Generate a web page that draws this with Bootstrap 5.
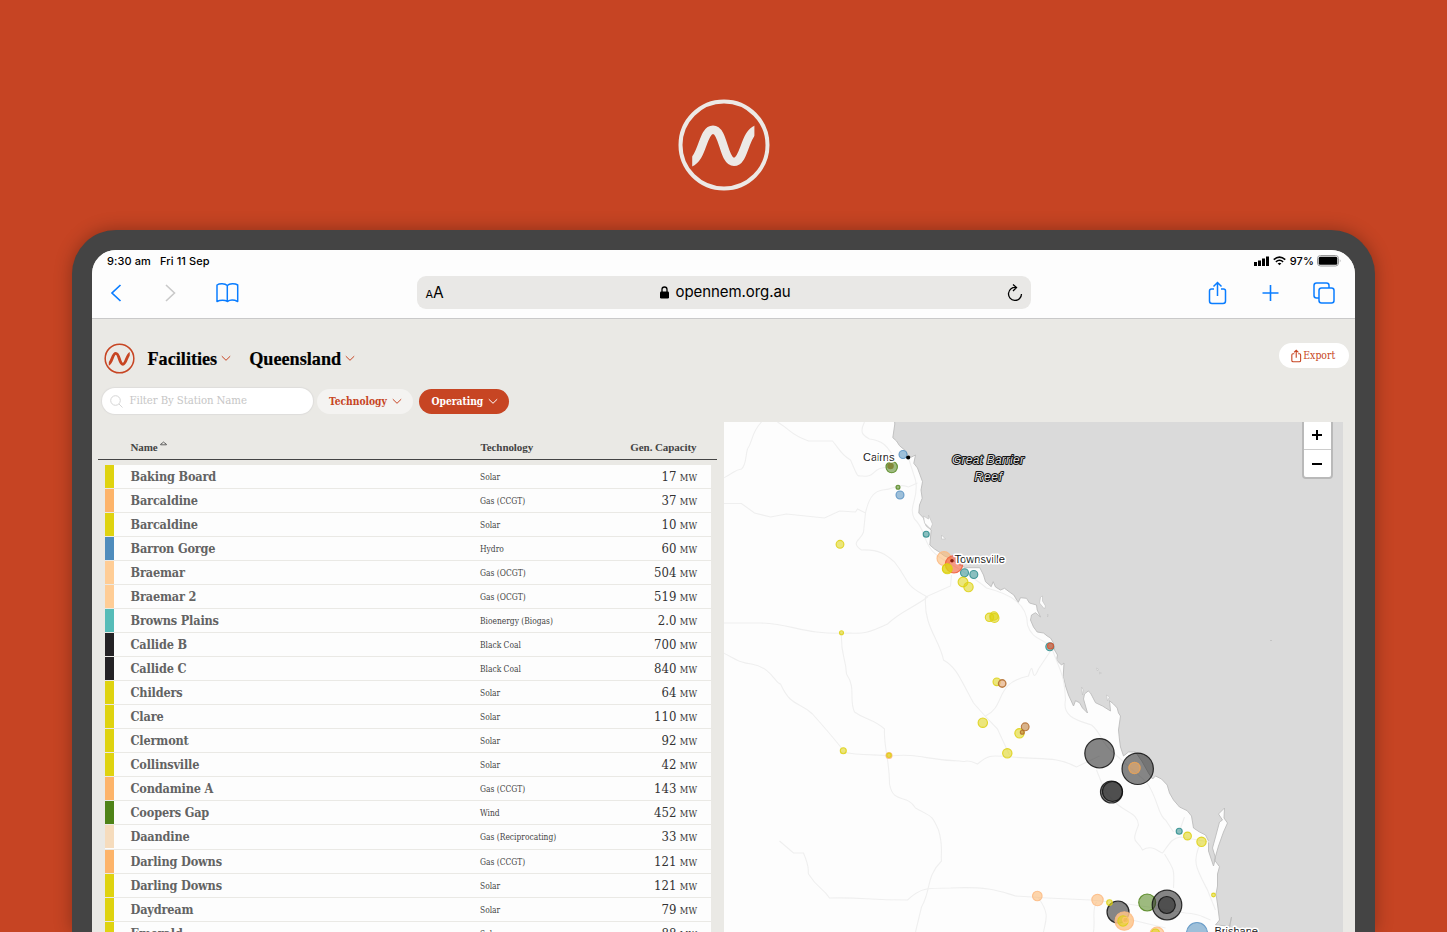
<!DOCTYPE html>
<html lang="en">
<head>
<meta charset="utf-8">
<meta name="viewport" content="width=device-width, initial-scale=1">
<title>OpenNEM Facilities</title>
<link href="https://cdn.jsdelivr.net/npm/bootstrap@5.3.0/dist/css/bootstrap.min.css" rel="stylesheet">
<style>
:root{--rust:#c74523;--paper:#eae9e5;--ios:#0a7dff}
html,body{height:932px;overflow:hidden}
body{background:#c64423;font-family:Inter,"Liberation Sans",sans-serif;color:#000}
svg{display:block;flex:none}
.hero{height:230px;padding-top:98.5px}
.tablet{width:1303px;height:702px;margin-left:72px;border:20px solid #444;border-bottom:0;border-radius:44px 44px 0 0;box-shadow:0 0 18px rgba(0,0,0,.3);background:#444}
.screen{height:682px;border-radius:24px 24px 0 0;background:var(--paper);overflow:hidden}
.chrome{height:69px;background:#fdfdfd;border-bottom:1px solid #c9c9c9}
.status{height:22px;padding:0 14px 0 15px;font-size:11px;line-height:22px;font-weight:500;letter-spacing:.1px}
.tools{height:42px;color:var(--ios);margin-top:-.5px}
.address{width:614px;height:33px;border-radius:9px;background:#e9e8e6;color:#000;font-size:15px;letter-spacing:-.08px}
.serif{font-family:"DejaVu Serif Condensed","DejaVu Serif",serif;font-stretch:condensed}
.display-face{font-family:"Liberation Serif",serif;font-weight:700}
.site-head{height:69px;padding:0 6px 0 12px}
.site-head .display-face{font-size:18.2px;line-height:24px;-webkit-text-stroke:.2px #000}
.pill{height:25px;border-radius:13px;font-size:10.2px;line-height:25px;white-space:nowrap}
.export{width:70px;background:#fff;color:var(--rust)}
.filters{height:26px;padding-left:10px}
.search{width:211px;height:26px;background:#fff;border-radius:13px;color:#c6c6c6;font-size:11.3px;letter-spacing:-.08px;box-shadow:0 0 1px 1px #dedddb}
.main-area{height:511px;padding-left:6px;margin-top:8px}
.listing{width:619px}
.thead-line{height:38px;border-bottom:1px solid #444;color:#444;font-size:11px;letter-spacing:-.08px;padding:15px 0 0 32.5px;line-height:20px}
.rows{margin:4px 0 0 7px;width:605.5px;height:469px;overflow:hidden}
.station{height:24.04px;border-top:1px solid var(--paper);background:#fdfdfd;line-height:24px}
.swatch{width:9px;height:23px}
.s-name{width:349.500px;margin-left:16.500px;font-size:12.6px;letter-spacing:-.17px;font-weight:700;color:#636363}
.s-tech{width:116px;font-size:8.4px;color:#444}
.s-cap{width:101px;text-align:right;font-size:13px;color:#333}
.s-cap small{font-size:9.3px;margin-left:3.5px}
.map-pane{width:619px;height:511px;margin-left:6.5px;background:#fdfdfd;position:relative;overflow:hidden}
.zoomer{position:absolute;right:10px;top:-3px;width:31px;height:60px;border:2px solid #b9b9b9;border-radius:4px;background:#fff}
.zoomer div{height:27px}
.zoomer div:first-child{height:29px;border-bottom:1px solid #ccc}
.solar{background:#dfd310}.ccgt{background:#fdb46a}.ocgt{background:#ffcd96}.hydro{background:#4f8cbc}
.bio{background:#57bcb8}.coal{background:#242225}.wind{background:#4f8318}.recip{background:#f6dcbd}
</style>
</head>
<body>
<header class="hero d-flex justify-content-center">
  <svg width="92" height="92" viewBox="0 0 92 92" fill="none" stroke="#ece9e6"><defs><clipPath id="waveEnds"><path d="M14.200 0h62.200v92H14.200z"/></clipPath></defs><circle cx="46" cy="46" r="43.500" stroke-width="4"/><path clip-path="url(#waveEnds)" d="M11 64C25 61 24 30.700 35 30.700C46 30.700 45 62.900 56 62.900C67 62.900 66 33 80 30" stroke-width="8.400"/></svg>
</header>
<div class="tablet">
<div class="screen">
  <div class="chrome">
    <div class="status d-flex justify-content-between">
      <div><span>9:30 am</span><span style="margin-left:6px">&nbsp;Fri 11 Sep</span></div>
      <div class="d-flex align-items-center">
        <svg width="15" height="10" viewBox="0 0 15 10"><path d="M0 6h3v4H0zM4 4.500h3V10H4zM8 2.500h3V10H8zM12 .500h3V10h-3z"/></svg>
        <svg style="margin-left:4px" width="13" height="10" viewBox="0 0 14 10" fill="none" stroke="#000" stroke-width="1.700"><path d="M.8 3.500Q7-1.800 13.200 3.500M3.100 5.900Q7 2.600 10.900 5.900"/><path d="M5 7.700Q7 6.300 9 7.700L7 9.700z" fill="#000" stroke="none"/></svg>
        <span style="margin-left:4px">97%</span>
        <svg style="margin-left:3px" width="24" height="12" viewBox="0 0 24 12"><rect x=".5" y=".5" width="21" height="10.500" rx="3" fill="none" stroke="#999"/><rect x="1.700" y="1.700" width="18.600" height="8" rx="1.500"/><path d="M22.800 4.200q1.400 1.600 0 3.200z" fill="#999"/></svg>
      </div>
    </div>
    <div class="tools d-flex align-items-center">
      <svg width="34" height="20" viewBox="0 0 34 20" fill="none" stroke="currentColor" stroke-width="1.700"><path d="M28.500 2L20 10l8.500 8"/></svg>
      <svg style="margin-left:38px" width="14" height="20" viewBox="0 0 14 20" fill="none" stroke="#c9c9c9" stroke-width="1.600"><path d="M2 2l8.500 8L2 18"/></svg>
      <svg style="margin-left:38px" width="24" height="20" viewBox="0 0 24 20" fill="none" stroke="currentColor" stroke-width="1.500" stroke-linejoin="round"><path d="M11.300 2.500C9 .3 3.500.3 1 2V18.500C4 17 9 16.800 11.300 18.500C14 16.800 18.500 17 21.700 18.500V2C19 .3 13.500.3 11.300 2.500V18.500"/></svg>
      <div class="address d-flex align-items-center justify-content-between" style="margin-left:176.500px;padding:0 8px 0 9px">
        <span><span style="font-size:11px">A</span><span style="font-size:15.500px">A</span></span>
        <span class="d-flex align-items-center"><svg style="margin-right:7px" width="9" height="13" viewBox="0 0 9 13"><rect y="5.500" width="9" height="7" rx="1.300"/><path d="M2 6V3.500a2.500 2.500 0 015 0V6" fill="none" stroke="#000" stroke-width="1.300"/></svg>opennem.org.au</span>
        <svg width="16" height="18" viewBox="0 0 16 18" fill="none" stroke="#000" stroke-width="1.300"><path d="M9 3.500A6.500 6.500 0 1014.500 10M6 .500l3.500 3L6 7"/></svg>
      </div>
      <svg style="margin-left:177.500px" width="20" height="24" viewBox="0 0 20 24" fill="none" stroke="currentColor" stroke-width="1.500"><path d="M6 8H3.500Q1.500 8 1.500 10V20Q1.500 22.500 4 22.500H15Q17.500 22.500 17.500 20V10Q17.500 8 15.500 8H13M9.500 15V2M5.500 5.500l4-4 4 4"/></svg>
      <svg style="margin-left:34px" width="18" height="18" viewBox="0 0 18 18" stroke="currentColor" stroke-width="1.600"><path d="M8.500 1V17M.5 9h16"/></svg>
      <svg style="margin-left:33px" width="22" height="22" viewBox="0 0 22 22" fill="none" stroke="currentColor" stroke-width="1.500"><rect x="6" y="6" width="15" height="15" rx="2.500"/><path d="M6 16H3.500Q1 16 1 13.500V3.500Q1 1 3.500 1h10Q16 1 16 3.500V6"/></svg>
    </div>
  </div>

  <div class="site-head d-flex align-items-center">
    <svg style="margin-top:9px" width="31" height="31" viewBox="0 0 92 92" fill="none" stroke="#c74523"><circle cx="46" cy="46" r="42.500" stroke-width="4.500"/><path clip-path="url(#waveEnds)" d="M11 64C25 61 24 30.700 35 30.700C46 30.700 45 62.900 56 62.900C67 62.900 66 33 80 30" stroke-width="8.600"/></svg>
    <span class="display-face" style="margin:11px 0 0 12.500px">Facilities</span>
    <svg style="margin:10px 0 0 4px" width="10" height="7" viewBox="0 0 10 7" fill="none" stroke="#c74523"><path d="M.8 1.200L5 5.300 9.200 1.200"/></svg>
    <span class="display-face" style="margin:11px 0 0 18px">Queensland</span>
    <svg style="margin:10px 0 0 3.500px" width="10" height="7" viewBox="0 0 10 7" fill="none" stroke="#c74523"><path d="M.8 1.200L5 5.300 9.200 1.200"/></svg>
    <div class="pill export serif ms-auto d-flex justify-content-center align-items-center" style="margin-top:4px;padding-right:2px;font-size:10.400px"><svg style="margin-right:1.500px" width="11" height="14" viewBox="0 0 20 24" fill="none" stroke="currentColor" stroke-width="2"><path d="M6 8H3.500Q1.500 8 1.500 10V20Q1.500 22.500 4 22.500H15Q17.500 22.500 17.500 20V10Q17.500 8 15.500 8H13M9.500 15V2M5.500 5.500l4-4 4 4"/></svg>Export</div>
  </div>
  <div class="filters serif d-flex align-items-center">
    <div class="search d-flex align-items-center"><svg style="margin:0 7px 0 7.500px" width="13" height="13" viewBox="0 0 13 13" fill="none" stroke="#d5d5d5"><circle cx="5.500" cy="5.500" r="4.800"/><path d="M9 9l3.500 3.500"/></svg>Filter By Station Name</div>
    <div class="pill fw-bold d-flex align-items-center" style="margin-left:4px;width:96px;padding-left:12px;background:#f4f3f1;color:#c74523"><span style="width:63px">Technology</span><svg width="10" height="7" viewBox="0 0 10 7" fill="none" stroke="currentColor"><path d="M.8 1.200L5 5.300 9.200 1.200"/></svg></div>
    <div class="pill fw-bold d-flex align-items-center" style="margin-left:6px;width:90px;padding-left:12.500px;background:#c74523;color:#fff"><span style="width:56px">Operating</span><svg width="10" height="7" viewBox="0 0 10 7" fill="none" stroke="currentColor"><path d="M.8 1.200L5 5.300 9.200 1.200"/></svg></div>
  </div>

  <div class="main-area d-flex">
    <div class="listing">
      <div class="thead-line display-face d-flex"><span style="width:350px">Name<svg class="d-inline-block align-top" style="margin:4px 0 0 2px" width="7" height="5" viewBox="0 0 7 5" fill="none" stroke="#444" stroke-width=".8"><path d="M.5 3.800Q1 2.500 2 2.300 3.500-.2 5 2.300 6.200 2.500 6.500 3.800z"/></svg></span><span style="width:116px">Technology</span><span class="text-end" style="width:100px">Gen. Capacity</span></div>
      <div class="rows serif">
        <div class="station d-flex"><i class="swatch solar"></i><span class="s-name">Baking Board</span><span class="s-tech">Solar</span><span class="s-cap">17<small>MW</small></span></div>
        <div class="station d-flex"><i class="swatch ccgt"></i><span class="s-name">Barcaldine</span><span class="s-tech">Gas (CCGT)</span><span class="s-cap">37<small>MW</small></span></div>
        <div class="station d-flex"><i class="swatch solar"></i><span class="s-name">Barcaldine</span><span class="s-tech">Solar</span><span class="s-cap">10<small>MW</small></span></div>
        <div class="station d-flex"><i class="swatch hydro"></i><span class="s-name">Barron Gorge</span><span class="s-tech">Hydro</span><span class="s-cap">60<small>MW</small></span></div>
        <div class="station d-flex"><i class="swatch ocgt"></i><span class="s-name">Braemar</span><span class="s-tech">Gas (OCGT)</span><span class="s-cap">504<small>MW</small></span></div>
        <div class="station d-flex"><i class="swatch ocgt"></i><span class="s-name">Braemar 2</span><span class="s-tech">Gas (OCGT)</span><span class="s-cap">519<small>MW</small></span></div>
        <div class="station d-flex"><i class="swatch bio"></i><span class="s-name">Browns Plains</span><span class="s-tech">Bioenergy (Biogas)</span><span class="s-cap">2.0<small>MW</small></span></div>
        <div class="station d-flex"><i class="swatch coal"></i><span class="s-name">Callide B</span><span class="s-tech">Black Coal</span><span class="s-cap">700<small>MW</small></span></div>
        <div class="station d-flex"><i class="swatch coal"></i><span class="s-name">Callide C</span><span class="s-tech">Black Coal</span><span class="s-cap">840<small>MW</small></span></div>
        <div class="station d-flex"><i class="swatch solar"></i><span class="s-name">Childers</span><span class="s-tech">Solar</span><span class="s-cap">64<small>MW</small></span></div>
        <div class="station d-flex"><i class="swatch solar"></i><span class="s-name">Clare</span><span class="s-tech">Solar</span><span class="s-cap">110<small>MW</small></span></div>
        <div class="station d-flex"><i class="swatch solar"></i><span class="s-name">Clermont</span><span class="s-tech">Solar</span><span class="s-cap">92<small>MW</small></span></div>
        <div class="station d-flex"><i class="swatch solar"></i><span class="s-name">Collinsville</span><span class="s-tech">Solar</span><span class="s-cap">42<small>MW</small></span></div>
        <div class="station d-flex"><i class="swatch ccgt"></i><span class="s-name">Condamine A</span><span class="s-tech">Gas (CCGT)</span><span class="s-cap">143<small>MW</small></span></div>
        <div class="station d-flex"><i class="swatch wind"></i><span class="s-name">Coopers Gap</span><span class="s-tech">Wind</span><span class="s-cap">452<small>MW</small></span></div>
        <div class="station d-flex"><i class="swatch recip"></i><span class="s-name">Daandine</span><span class="s-tech">Gas (Reciprocating)</span><span class="s-cap">33<small>MW</small></span></div>
        <div class="station d-flex"><i class="swatch ccgt"></i><span class="s-name">Darling Downs</span><span class="s-tech">Gas (CCGT)</span><span class="s-cap">121<small>MW</small></span></div>
        <div class="station d-flex"><i class="swatch solar"></i><span class="s-name">Darling Downs</span><span class="s-tech">Solar</span><span class="s-cap">121<small>MW</small></span></div>
        <div class="station d-flex"><i class="swatch solar"></i><span class="s-name">Daydream</span><span class="s-tech">Solar</span><span class="s-cap">79<small>MW</small></span></div>
        <div class="station d-flex"><i class="swatch solar"></i><span class="s-name">Emerald</span><span class="s-tech">Solar</span><span class="s-cap">88<small>MW</small></span></div>
      </div>
    </div>
    <div class="map-pane">
      <svg width="619" height="511" viewBox="723.5 422 619 511">
        <!-- sea -->
        <path fill="#dadada" stroke="#bcbcbc" stroke-width=".9" d="M894 420L894.300 424 892.300 437.700 896 441 899 445.700 905.300 451 907.300 455 911 457 915 455 913.300 463.300 917 468 919.300 474.300 922 481.700 920.500 490 921.700 498.300 919 505 918.300 513 923 518 925.700 526 930.700 530 929.300 545 934 549 938.300 551.700 944 556 950 558.300 957 564 965 567.700 979.300 567.700 983 575 985 581.700 990.700 586.700 992.700 581.700 995 587 1000 590 1004 588.300 1009 592 1013.300 595 1017.700 602.500 1020 597.700 1026 598.300 1029 603 1036 605 1036.700 610 1040 617 1035 612.700 1031 615 1030 620 1033 627 1036.700 632 1043 633 1046.700 636 1050 638 1053 643 1054 650 1057 655 1056 660 1061 665 1063.500 663 1062.700 676.700 1065 686 1068 695 1073 706 1075 700.700 1079 702.700 1082 708 1087 713 1085 706 1083 699 1084 694 1087.700 691 1090 693 1095 702.700 1102 706 1110 711 1109 700.700 1113 704 1116.700 708 1118 713 1120 716 1118 730 1119 740 1120 747 1123 756 1128 752 1135 752 1141.700 761.700 1148 773 1152 779 1155 776 1161 779 1166.700 785 1169 793 1173 800 1179 807 1186.700 810.700 1191 816 1193 828 1199 832 1205 835 1208 841 1208 851 1213 866 1215 858 1212 848 1215 837 1219 822 1222 820 1218 814 1224 808 1223.500 818 1227 823 1223 832 1218 846 1214 860 1219 866.700 1217 874 1217 886 1215.500 894 1217 904 1219 920 1215 925 1229 926 1231 917 1228 934H1344V420z"/>
        <g fill="#fdfdfd" stroke="#c4c4c4" stroke-width=".7"><path d="M923 516l5 3 0-4 4 9-2 5-6-6zM941 535l4 4-4 0zM1040 597l2-1 0 5 3 5-1 3-5-6zM1047 614l1 1-1 2zM1081 687l2 3-1 5zM1106 695l3 2-2 4zM1096 668l2 1-1 2zM1099 672l2 1-2 1z"/></g>
        <circle cx="1270.500" cy="640.500" r=".6" fill="#aaa"/>
        <!-- roads -->
        <g fill="none" stroke="#efefef" stroke-width="1.100">
          <path d="M723 478C735 472 734 470 741 469C746 465 745 455 747 449C753 440 750 434 761 422M777 422C793 432 789 434 808 441H832C839 449 840 454 850 460C858 478 856 476 862 476C876 478 870 467 890 467M864 422C858 434 864 436 869 439C885 441 888 449 892 455"/>
          <path d="M723 503.500H741L754 513L770 517L786 514L824 518L839 511L855 512L857 509L865 513C869 494 876 491 882 490C896 489 896 483 908 487L917 483M865 513L863 532C861 540 849 542 861 550C880 549 887 556 894 562C910 582 902 584 927 597C916 606 899 612 887 624C868 633 862 634 850 633C800 635 795 624 760 623H723M841 633C840 656 845 655 846 674C856 689 848 699 854 712C865 720 873 719 884 729C883 746 889 760 889 784C893 805 906 793 915 808C931 817 931 814 938 830C943 846 940 855 941 861C925 877 931 890 921 907L915 932"/>
          <path d="M723 653C737 660 740 663 751 664C771 667 775 684 780 684C791 708 799 701 812 714Q829 733 841 748M841 752C862 756 875 754 889 756C920 753 924 760 959 761C967 763 964 758 977 764C990 753 992 756 1012 757C1040 760 1056 756 1076 767L1099 756"/>
          <path d="M779 841L793 853H803C810 870 807 869 808 874C818 890 822 887 829 898C865 897 863 900 907 900C920 888 925 888 950 888C990 886 1001 892 1015 896L1047 898 1090 900 1120 903 1155 908 1185 913C1202 914 1201 917 1210 920"/>
          <path d="M907 455L915 480C919 499 907 506 914 519C927 531 921 547 942 559C960 570 974 578 986 588C1010 594 1027 604 1027 625C1032 642 1047 638 1052 650C1060 672 1064 675 1065 700C1061 718 1080 721 1091 725C1101 733 1100 742 1112 752L1146 782C1158 799 1157 815 1165 820L1173 832"/>
          <path d="M951 575L950 586 925 597C923 627 939 639 943 660C957 668 960 680 973 703Q984 716 997 729L1009 755M985 716C1006 706 993 683 1028 676C1034 654 1030 689 1038 669L1052 648M1096 770L1104 790C1121 815 1137 810 1138 825C1130 845 1136 838 1142 850C1152 844 1158 852 1162 853C1170 842 1172 838 1180 837L1209 842"/>
          <path d="M1164 854C1174 870 1174 870 1173 888M1200 843C1191 862 1196 869 1207 890L1215 910M1179 831L1184 817"/>
          <path d="M1038 898C1050 915 1045 920 1043 932M1096 902C1091 910 1095 919 1093 932M1123 918L1165 928"/>
        </g>
        <!-- facilities -->
        <g stroke-opacity=".85" fill-opacity=".55" stroke-width="1.100">
          <g fill="#4f8cbc" stroke="#5790c2"><circle cx="902.500" cy="454.500" r="4"/><circle cx="899.500" cy="495" r="4"/><circle cx="1196.500" cy="933" r="10.500"/></g>
          <circle cx="890" cy="466" r="3.300" fill="#b0703a" stroke="none" fill-opacity=".8"/>
          <g fill="#4f8318" stroke="#4f8318"><circle cx="891.200" cy="467" r="5.700"/><circle cx="897.500" cy="487.200" r="2"/><circle cx="1146.700" cy="902.500" r="8.500"/></g>
          <g fill="#2b8c8c" stroke="#2b8c8c"><circle cx="925.700" cy="534.200" r="3"/><circle cx="964" cy="572.800" r="4"/><circle cx="973.300" cy="574.500" r="4"/><circle cx="1049.300" cy="646.700" r="4"/><circle cx="1178.700" cy="831.300" r="3"/></g>
          <g fill="#fdb46a" stroke="#fdb980"><circle cx="943.500" cy="558.500" r="7"/><circle cx="1036.800" cy="896" r="4.800"/><circle cx="1097" cy="900" r="5.700"/><circle cx="888.500" cy="755.500" r="3"/><circle cx="1156.500" cy="934" r="7"/></g>
          <circle cx="953.500" cy="564.300" r="8.700" fill="#f24a20" stroke="#f25a38"/>
          <g fill="#222" stroke="#111" stroke-width="1.200"><circle cx="1099" cy="753.300" r="14.700"/><circle cx="1137.200" cy="768.800" r="15.700"/><circle cx="1111" cy="792" r="11"/><circle cx="1112" cy="791.500" r="10"/><circle cx="1117.500" cy="912" r="11"/><circle cx="1166.500" cy="905" r="14.800"/><circle cx="1166.300" cy="905" r="8.500"/></g>
          <circle cx="1134" cy="768" r="5.700" fill="#fdb46a" stroke="#f5a650"/>
          <circle cx="1123.800" cy="921" r="9.300" fill="#fdc48a" stroke="#fdb980" fill-opacity=".85"/>
          <g fill="#dfd310" stroke="#ddd010"><circle cx="839.500" cy="544.300" r="3.900"/><circle cx="841" cy="632.700" r="2"/><circle cx="946.500" cy="568.500" r="4.500"/><circle cx="946.800" cy="568.800" r="5"/><circle cx="962.500" cy="582" r="4.900"/><circle cx="968" cy="587" r="4.700"/><circle cx="989" cy="617.300" r="4.200"/><circle cx="993.500" cy="616" r="4.200"/><circle cx="994" cy="618" r="4.500"/><circle cx="996.300" cy="681.800" r="3.800"/><circle cx="982.300" cy="722.700" r="4.700"/><circle cx="1006.800" cy="753.300" r="4.700"/><circle cx="1019" cy="733.300" r="4.700"/><circle cx="842.800" cy="750.800" r="3"/><circle cx="888.500" cy="755.300" r="2.200"/><circle cx="1187" cy="836" r="3.900"/><circle cx="1201" cy="841.800" r="4.700"/><circle cx="1213" cy="895" r="1.900"/><circle cx="1109" cy="902.500" r="2.800"/><circle cx="1122.500" cy="921" r="5.200"/><circle cx="1155" cy="933" r="4"/></g>
          <circle cx="1125" cy="920" r="2.800" fill="#fdb46a" stroke="#ffc970"/>
          <g fill="#b9752c" stroke="#b06a2a"><circle cx="1001.700" cy="683.500" r="3.700" fill="#e8b890" stroke-width="1.400" fill-opacity=".8"/><circle cx="1024.700" cy="726.800" r="3.900"/><circle cx="1021.800" cy="732.300" r="2"/></g>
          <circle cx="1050" cy="646" r="3" fill="#f24a20" stroke="#e0502c"/>
        </g>
        <circle cx="907.700" cy="457.500" r="2.100"/><circle cx="951.500" cy="560.800" r="1.800" fill="#8a1d10"/>
        <g font-family="Liberation Sans, sans-serif" font-size="11.200" fill="#222" stroke="#fff" stroke-width="3" stroke-linejoin="round" paint-order="stroke">
          <text x="862.500" y="461" textLength="31.500">Cairns</text>
          <text x="954" y="563" textLength="50.500">Townsville</text>
          <text x="1214" y="934.500" textLength="43.500">Brisbane</text>
        </g>
        <g font-family="Liberation Sans, sans-serif" font-size="12" font-style="italic" fill="#dedede" stroke="#111" stroke-width="2" stroke-linejoin="round" paint-order="stroke">
          <text x="951.500" y="463.500" textLength="72">Great Barrier</text><text x="974" y="481" textLength="27.500">Reef</text>
        </g>
      </svg>
      <div class="zoomer"><div class="d-flex align-items-center justify-content-center"><svg width="12" height="12" viewBox="0 0 12 12" stroke="#000" stroke-width="2"><path d="M6 1v10M1 6h10"/></svg></div><div class="d-flex align-items-center justify-content-center"><svg width="12" height="4" viewBox="0 0 12 4" stroke="#000" stroke-width="2"><path d="M1 2h10"/></svg></div></div>
    </div>
  </div>
</div>
</div>
<script src="https://cdn.jsdelivr.net/npm/bootstrap@5.3.0/dist/js/bootstrap.bundle.min.js"></script>
</body>
</html>
